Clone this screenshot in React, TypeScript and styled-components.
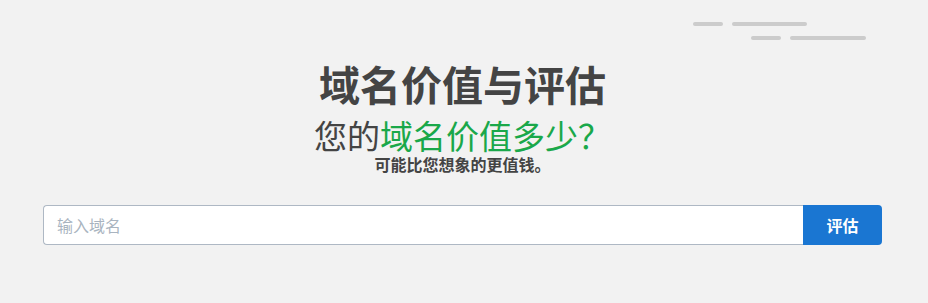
import React from 'react'
import styled, { createGlobalStyle } from 'styled-components'

const ink = '#444444';
const green = '#1aa84a';
const blue = '#1a76d2';

const GlobalStyle = createGlobalStyle`
  html, body {
    margin: 0;
    padding: 0;
    background: #f2f2f2;
    font-family: "Noto Sans CJK SC", "Noto Sans", sans-serif;
  }
`

const Page = styled.div`
  box-sizing: border-box;
  width: 928px;
  height: 303px;
  padding: 22px 46px 0 43px;
  display: flex;
  flex-direction: column;
  overflow: hidden;
`

const Deco = styled.div`
  align-self: flex-end;
  margin-right: 16px;
  width: 173px;
  display: flex;
  flex-direction: column;
  gap: 10px;
`

const DecoRow = styled.div<{ $end?: boolean }>`
  display: flex;
  gap: 9px;
  justify-content: ${p => (p.$end ? 'flex-end' : 'flex-start')};
`

const Dash = styled.span<{ $w: number }>`
  display: block;
  width: ${p => p.$w}px;
  height: 4px;
  border-radius: 2px;
  background: #cccccc;
`

const Hero = styled.header`
  display: flex;
  flex-direction: column;
  align-items: center;
  color: ${ink};
  margin-top: 25px;
  font-family: "Liberation Sans", "Noto Sans CJK SC", sans-serif;
`

const Title = styled.h1`
  margin: 0;
  font-size: 41px;
  line-height: 44px;
  font-weight: 700;
`

const Subtitle = styled.h2`
  margin: 10px 0 0;
  font-size: 33px;
  line-height: 38px;
  font-weight: 400;

  em {
    font-style: normal;
    color: ${green};
  }
`

const Note = styled.p`
  margin: 0;
  font-size: 16px;
  line-height: 17px;
  font-weight: 700;
`

const SearchBar = styled.form`
  display: flex;
  margin-top: 31px;
  height: 40px;
`

const Field = styled.input`
  flex: 1;
  box-sizing: border-box;
  height: 40px;
  border: 1px solid #aeb8c4;
  border-right: none;
  border-radius: 4px 0 0 4px;
  background: #ffffff;
  padding: 0 13px;
  font-family: inherit;
  font-size: 16px;
  color: ${ink};
  outline: none;

  &::placeholder {
    color: #a9b4c0;
  }
`

const Submit = styled.button`
  width: 79px;
  height: 40px;
  border: none;
  border-radius: 0 4px 4px 0;
  background: ${blue};
  color: #ffffff;
  font-family: inherit;
  font-size: 16px;
  font-weight: 700;
  cursor: pointer;
`

export default function App() {
  return (
    <>
      <GlobalStyle />
      <Page>
        <Deco>
          <DecoRow>
            <Dash $w={30} />
            <Dash $w={75} />
          </DecoRow>
          <DecoRow $end>
            <Dash $w={30} />
            <Dash $w={76} />
          </DecoRow>
        </Deco>
        <Hero>
          <Title>域名价值与评估</Title>
          <Subtitle>
            您的<em>域名价值多少？</em>
          </Subtitle>
          <Note>可能比您想象的更值钱。</Note>
        </Hero>
        <SearchBar onSubmit={e => e.preventDefault()}>
          <Field placeholder="输入域名" />
          <Submit type="submit">评估</Submit>
        </SearchBar>
      </Page>
    </>
  )
}
